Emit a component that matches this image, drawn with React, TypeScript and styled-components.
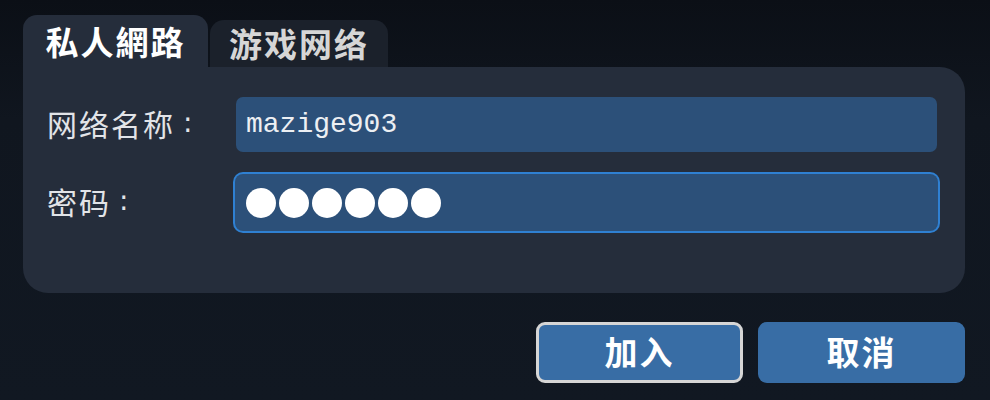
import React from "react";
import styled, { createGlobalStyle } from "styled-components";

const GlobalStyle = createGlobalStyle`
  html, body {
    margin: 0;
    padding: 0;
    height: 100%;
  }
  body {
    background: linear-gradient(180deg, #0b0f16 0%, #10161f 30%, #111822 100%);
    font-family: "Noto Sans CJK SC", "Noto Sans", sans-serif;
    overflow: hidden;
  }
`;

const Dialog = styled.div`
  width: 990px;
  height: 400px;
  box-sizing: border-box;
  padding: 15px 25px 0 23px;
  display: flex;
  flex-direction: column;
`;

const TabBar = styled.div`
  display: flex;
  align-items: flex-end;
  gap: 2px;
  height: 52px;
`;

const Tab = styled.div<{ $active?: boolean }>`
  display: flex;
  align-items: center;
  justify-content: center;
  box-sizing: border-box;
  width: ${(p) => (p.$active ? 185 : 178)}px;
  height: ${(p) => (p.$active ? 52 : 47)}px;
  border-radius: 14px 14px 0 0;
  background: ${(p) => (p.$active ? "#252d3b" : "#1b212b")};
  color: ${(p) => (p.$active ? "#ffffff" : "#d6d6d6")};
  font-size: 33px;
  font-weight: 700;
  letter-spacing: 2px;
  line-height: 1;
`;

const Panel = styled.div`
  box-sizing: border-box;
  width: 942px;
  height: 226px;
  padding: 30px 28px 0 24px;
  background: #252d3b;
  border-radius: 0 25px 25px 25px;
  display: grid;
  grid-template-columns: 189px 701px;
  grid-auto-rows: 55px;
  row-gap: 23px;
  align-content: start;
`;

const Label = styled.div`
  display: flex;
  align-items: center;
  color: #e2e4e8;
  font-size: 30px;
  letter-spacing: 2px;
  line-height: 1;
  padding-bottom: 4px;
`;

const Colon = styled.span`
  margin-left: 8px;
  font-family: "DejaVu Sans", sans-serif;
  font-size: 28px;
`;

const Field = styled.div<{ $focused?: boolean }>`
  display: flex;
  align-items: center;
  gap: 3px;
  box-sizing: border-box;
  padding-left: 10px;
  background: #2c5079;
  border-radius: 7px;
  box-shadow: ${(p) =>
    p.$focused ? "0 0 0 1px #2c5079, 0 0 0 3px #2f80d2" : "none"};
  color: #eceff3;
  font-family: "Liberation Mono", "DejaVu Sans Mono", monospace;
  font-size: 28px;
`;

const Dot = styled.span`
  display: inline-block;
  width: 30px;
  height: 30px;
  border-radius: 50%;
  background: #ffffff;
`;

const Actions = styled.div`
  display: flex;
  justify-content: flex-end;
  gap: 15px;
  width: 942px;
  margin-top: 29px;
`;

const Button = styled.button<{ $primary?: boolean }>`
  box-sizing: border-box;
  width: 207px;
  height: 61px;
  border-radius: 9px;
  border: ${(p) => (p.$primary ? "3px solid #d6d6d6" : "none")};
  background: #386da5;
  color: #ffffff;
  font-family: "Noto Sans CJK SC", sans-serif;
  font-size: 33px;
  font-weight: 700;
  letter-spacing: 2px;
  line-height: 1;
  padding: 0 0 2px;
  cursor: pointer;
`;

const passwordLength = 6;

export default function App() {
  return (
    <>
      <GlobalStyle />
      <Dialog>
        <TabBar>
          <Tab $active>私人網路</Tab>
          <Tab>游戏网络</Tab>
        </TabBar>
        <Panel>
          <Label>
            网络名称<Colon>:</Colon>
          </Label>
          <Field>mazige903</Field>
          <Label>
            密码<Colon>:</Colon>
          </Label>
          <Field $focused aria-label="password">
            {Array.from({ length: passwordLength }, (_, i) => (
              <Dot key={i} />
            ))}
          </Field>
        </Panel>
        <Actions>
          <Button $primary>加入</Button>
          <Button>取消</Button>
        </Actions>
      </Dialog>
    </>
  );
}
